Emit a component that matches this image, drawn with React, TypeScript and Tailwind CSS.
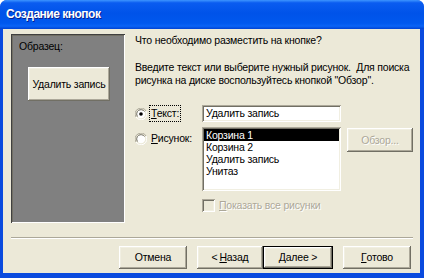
import React from 'react';

const raised =
  'bg-[#ece9d8] shadow-[inset_-1px_-1px_#716f64,inset_1px_1px_#ffffff,inset_-2px_-2px_#aca899,inset_2px_2px_#f1efe2]';
const sunken =
  'bg-white shadow-[inset_1px_1px_#aca899,inset_-1px_-1px_#ffffff,inset_2px_2px_#716f64,inset_-2px_-2px_#f1efe2]';

const Radio = ({ checked }: { checked?: boolean }) => (
  <svg width="12" height="12" viewBox="0 0 12 12" className="shrink-0">
    <path d="M11 3 A5.5 5.5 0 0 0 3 1 A5.5 5.5 0 0 0 1 9" fill="none" stroke="#aca899" strokeWidth="1" />
    <path d="M1 9 A5.5 5.5 0 0 0 11 3" fill="none" stroke="#ffffff" strokeWidth="1" />
    <circle cx="6" cy="6" r="4.2" fill="#ffffff" />
    <path d="M9.5 3.5 A4 4 0 0 0 2.5 8.5" fill="none" stroke="#716f64" strokeWidth="1" />
    {checked && <circle cx="6" cy="6" r="1.8" fill="#000000" />}
  </svg>
);

const Btn = ({
  children,
  className = '',
  isDefault,
}: {
  children: React.ReactNode;
  className?: string;
  isDefault?: boolean;
}) =>
  isDefault ? (
    <div className={`h-[23px] border border-black ${className}`}>
      <div className={`h-full flex items-center justify-center ${raised}`}>{children}</div>
    </div>
  ) : (
    <div className={`h-[23px] flex items-center justify-center ${raised} ${className}`}>{children}</div>
  );

export default function App() {
  const pictures = ['Корзина 1', 'Корзина 2', 'Удалить запись', 'Унитаз'];

  return (
    <div className="w-[424px] h-[278px] flex flex-col bg-[#0a4ade] rounded-t-[7px] overflow-hidden font-['Liberation_Sans',sans-serif] text-[10.5px] tracking-[-0.2px] leading-[13px] text-black">
      <div className="h-[29px] shrink-0 flex items-center pl-[6px] pb-[1px] bg-[linear-gradient(to_bottom,#3d95ff_0%,#0a5cf0_10%,#0053e9_45%,#0058ee_80%,#0a63f6_90%,#0042d2_100%)]">
        <span className="text-white font-bold text-[12px] tracking-[-0.5px] [text-shadow:1px_1px_#0a1e8c]">
          Создание кнопок
        </span>
      </div>

      <div className="flex-1 ml-[3px] mr-[4px] mb-[5px] bg-[#ece9d8] flex flex-col pl-[8px] pr-[7px] pt-[5px]">
        <div className="flex h-[189px]">
          <div className="w-[114px] shrink-0 bg-[#808080] shadow-[inset_1px_1px_#404040,inset_-1px_-1px_#ffffff,inset_2px_2px_#716f64] pl-[8px] pt-[6px]">
            <div>Образец:</div>
            <div className={`mt-[14px] ml-[9px] w-[82px] h-[34px] flex items-center justify-center ${raised}`}>
              Удалить запись
            </div>
          </div>

          <div className="ml-[10px] flex flex-col">
            <div>Что необходимо разместить на кнопке?</div>
            <div className="mt-[14px]">
              Введите текст или выберите нужный рисунок.&nbsp; Для поиска
              <br />
              рисунка на диске воспользуйтесь кнопкой "Обзор".
            </div>

            <div className="mt-[18px] flex items-center h-[17px]">
              <div className="w-[67px] flex items-center">
                <Radio checked />
                <span className="ml-[2px] px-[2px] py-[2px] outline outline-1 outline-dotted outline-black -outline-offset-1">
                  <span className="underline">Т</span>екст:
                </span>
              </div>
              <div className={`w-[139px] h-[17px] flex items-center pl-[4px] ${sunken}`}>Удалить запись</div>
            </div>

            <div className="mt-[5px] flex items-start">
              <div className="w-[67px] flex items-center pt-[5px]">
                <Radio />
                <span className="ml-[4px]">
                  <span className="underline">Р</span>исунок:
                </span>
              </div>
              <div className={`w-[139px] h-[64px] p-[2px] ${sunken}`}>
                {pictures.map((p, i) => (
                  <div
                    key={p}
                    className={`h-[12px] flex items-center pl-[2px] leading-[12px] ${i === 0 ? 'bg-black text-white' : ''}`}
                  >
                    {p}
                  </div>
                ))}
              </div>
              <Btn className="ml-[6px] mt-[1px] w-[66px] h-[24px] text-[#aca899] [text-shadow:1px_1px_#ffffff]">
                Обзор...
              </Btn>
            </div>

            <div className="mt-[8px] ml-[67px] flex items-center text-[#aca899] [text-shadow:1px_1px_#ffffff]">
              <div className="w-[13px] h-[13px] bg-[#ece9d8] shadow-[inset_1px_1px_#aca899,inset_-1px_-1px_#ffffff,inset_2px_2px_#716f64,inset_-2px_-2px_#f1efe2]" />
              <span className="ml-[4px]">
                <span className="underline">П</span>оказать все рисунки
              </span>
            </div>
          </div>
        </div>

        <div className="mt-[14px] h-[2px] border-t border-[#aca899] border-b border-b-white" />

        <div className="mt-[7px] flex items-center">
          <Btn className="ml-[108px] w-[68px]">Отмена</Btn>
          <Btn className="ml-[10px] w-[66px]">
            &lt; <span className="underline ml-[2px]">Н</span>азад
          </Btn>
          <Btn isDefault className="w-[70px]">
            <span className="underline">Д</span>алее &gt;
          </Btn>
          <Btn className="ml-[10px] w-[68px]">
            <span className="underline">Г</span>отово
          </Btn>
        </div>
      </div>
    </div>
  );
}
